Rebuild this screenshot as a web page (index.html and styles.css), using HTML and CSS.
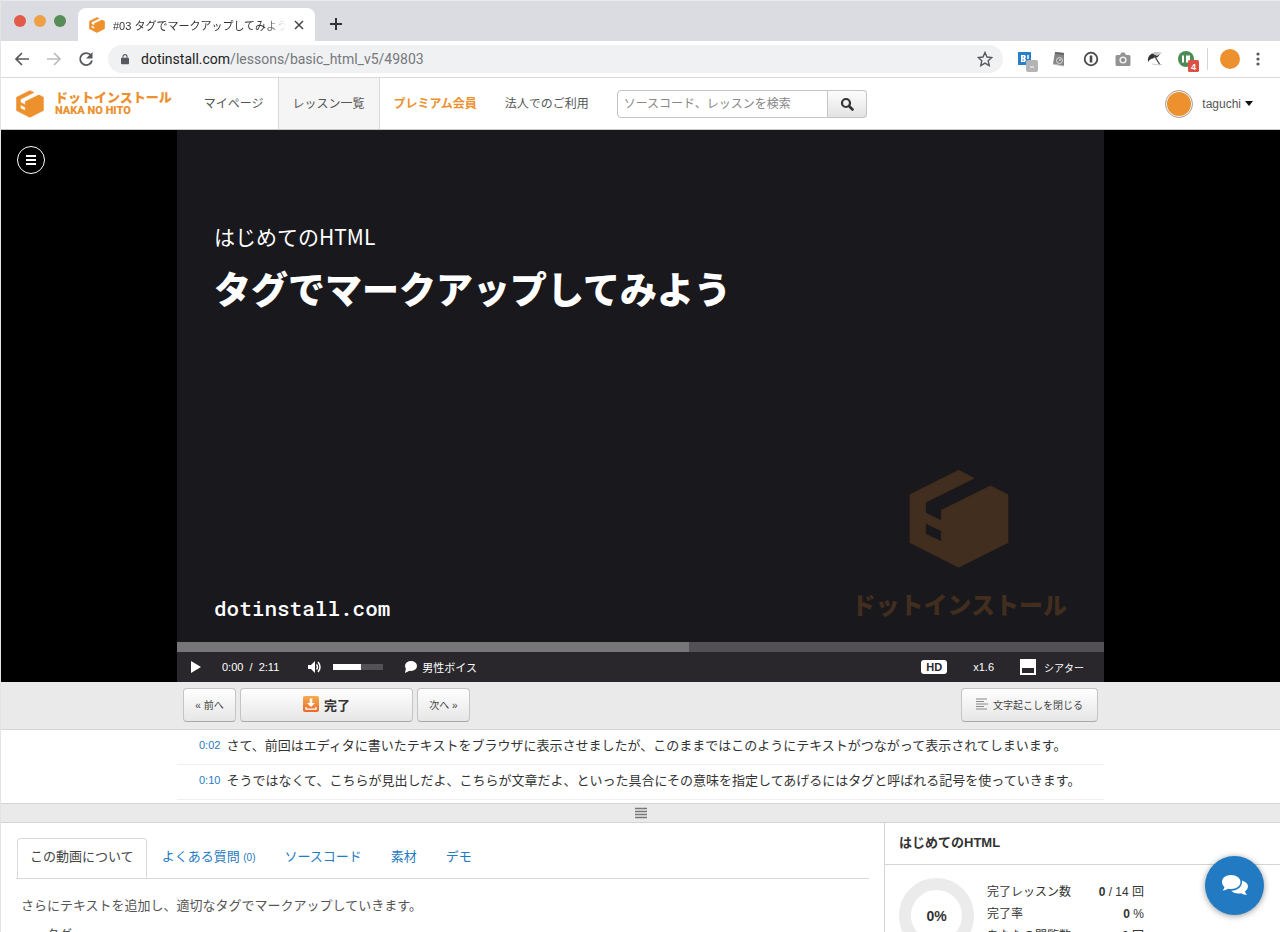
FILE: index.html
```html
<!DOCTYPE html>
<html lang="ja">
<head>
<meta charset="UTF-8">
<meta name="viewport" content="width=device-width, initial-scale=1.0">
<title>#03 タグでマークアップしてみよう</title>
<link rel="stylesheet" href="styles.css">
</head>
<body>
<svg class="defs" aria-hidden="true">
  <symbol id="box" viewBox="0 0 302 300">
    <path fill="currentColor" stroke="currentColor" stroke-width="4" stroke-linejoin="round" fill-rule="evenodd" d="M150 4 195 27 49 99V132L99 157V124L247 51 298 77V221L150 295 4 221V77ZM49 161 99 185V220L49 196Z"/>
  </symbol>
</svg>

<div class="tabstrip">
  <div class="lights">
    <span class="light red"></span>
    <span class="light yellow"></span>
    <span class="light green"></span>
  </div>
  <div class="browser-tab">
    <svg class="favicon"><use href="#box"/></svg>
    <span class="tab-title">#03 タグでマークアップしてみよう</span>
    <button class="icon-button" aria-label="閉じる">
      <svg width="10" height="10" viewBox="0 0 10 10"><path d="M1 1l8 8M9 1l-8 8" stroke="#444" stroke-width="1.5"/></svg>
    </button>
  </div>
  <button class="icon-button new-tab" aria-label="新しいタブ">
    <svg width="14" height="14" viewBox="0 0 14 14"><path d="M7 1v12M1 7h12" stroke="#333" stroke-width="2"/></svg>
  </button>
</div>

<div class="toolbar">
  <button class="icon-button" aria-label="戻る">
    <svg width="16" height="16" viewBox="0 0 16 16" fill="none" stroke="#55585c" stroke-width="1.7"><path d="M15 8H2.500M8 2 2 8l6 6"/></svg>
  </button>
  <button class="icon-button" aria-label="進む">
    <svg width="16" height="16" viewBox="0 0 16 16" fill="none" stroke="#babcbe" stroke-width="1.7"><path d="M1 8h12.500M8 2l6 6-6 6"/></svg>
  </button>
  <button class="icon-button" aria-label="再読み込み">
    <svg width="16" height="16" viewBox="0 0 16 16"><path d="M13 4.500A6 6 0 1 0 14 9.500" fill="none" stroke="#55585c" stroke-width="1.800"/><path d="M14.500 1v6.500H8z" fill="#55585c"/></svg>
  </button>
  <div class="address">
    <svg width="8" height="12" viewBox="0 0 10 13"><rect y="5" width="10" height="8" rx="1" fill="#55585c"/><path d="M2.500 5V3.500a2.500 2.500 0 0 1 5 0V5" fill="none" stroke="#55585c" stroke-width="1.400"/></svg>
    <span class="url"><b>dotinstall.com</b>/lessons/basic_html_v5/49803</span>
    <button class="icon-button" aria-label="ブックマーク">
      <svg width="16" height="16" viewBox="0 0 16 16"><path d="M8 1.500l2 4.500 4.800.5-3.600 3.300 1 4.800L8 12.100l-4.200 2.500 1-4.800L1.200 6.500 6 6z" fill="none" stroke="#55585c" stroke-width="1.400"/></svg>
    </button>
  </div>
  <div class="extensions">
    <svg width="22" height="22" viewBox="0 0 22 22"><rect x="2" y="4" width="13" height="13" fill="#2a7fc9"/><path d="M5 7h4l1 2-1 1.500 1 1.500-1 2H5z" fill="#fff"/><path d="M6.500 9h1.500M6.500 12h1.500" stroke="#2a7fc9"/><path d="M12 7v4M12 13v1.500" stroke="#fff" stroke-width="1.500"/><rect x="10" y="12" width="12" height="12" rx="2" fill="#b4b4b4"/><path d="M14 19h4" stroke="#fff"/></svg>
    <svg width="22" height="22" viewBox="0 0 22 22"><path d="M7 4l9 1v13l-11-2z" fill="#858585"/><path d="M7 4l9 1v2L7 6z" fill="#666"/><circle cx="11.500" cy="12.500" r="3" fill="none" stroke="#ddd"/><circle cx="12" cy="12" r="1" fill="#ddd"/><path d="M5 16l11 2" stroke="#bbb"/></svg>
    <svg width="22" height="22" viewBox="0 0 22 22"><circle cx="11" cy="11" r="6.300" fill="#fff" stroke="#4a4a4a" stroke-width="1.800"/><rect x="9.700" y="7.500" width="2.600" height="7" rx=".5" fill="#4a4a4a"/></svg>
    <svg width="22" height="22" viewBox="0 0 22 22"><path d="M5 7h3l1.500-2.500h3L14 7h3q1.500 0 1.500 1.500v8Q18.500 18 17 18H5q-1.500 0-1.500-1.500v-8Q3.500 7 5 7z" fill="#939393"/><circle cx="11" cy="12" r="3.600" fill="#eee"/><circle cx="11" cy="12" r="2" fill="#888"/></svg>
    <svg width="22" height="22" viewBox="0 0 22 22"><path d="M4 14Q3 8 8 5.500q4-2 8 0-1 3-3 4-2-1-4 1-3 0-5 3.500z" fill="#333"/><path d="M8 5.500q5-2.500 10-.5l-5 3z" fill="#c8c8c8"/><path d="M10 7l6 10" stroke="#444" stroke-width="1.300"/><path d="M8 16q6 1.500 10 .5" stroke="#ccc" fill="none"/></svg>
    <svg width="22" height="22" viewBox="0 0 22 22"><circle cx="10" cy="11" r="8" fill="#4d8b55"/><path d="M6 7.500h2v7H6zM10 7.500h4v7h-4z" fill="#fff"/><rect x="12" y="12" width="11" height="12" rx="1.500" fill="#dd5144"/><text x="17.500" y="21.500" text-anchor="middle" class="badge">4</text></svg>
  </div>
  <span class="profile"></span>
  <button class="icon-button" aria-label="メニュー">
    <svg width="4" height="16" viewBox="0 0 4 16" fill="#55585c"><circle cx="2" cy="3" r="1.600"/><circle cx="2" cy="8" r="1.600"/><circle cx="2" cy="13" r="1.600"/></svg>
  </button>
</div>

<header class="site-header">
  <a class="logo" href="#">
    <svg class="logo-mark"><use href="#box"/></svg>
    <span class="logo-text"><span class="logo-name">ドットインストール</span><span class="logo-sub">NAKA NO HITO</span></span>
  </a>
  <nav class="nav">
    <a href="#">マイページ</a>
    <a class="current" href="#">レッスン一覧</a>
    <a class="premium" href="#">プレミアム会員</a>
    <a href="#">法人でのご利用</a>
  </nav>
  <form class="search">
    <input type="text" aria-label="検索" placeholder="ソースコード、レッスンを検索">
    <button type="button" aria-label="検索する">
      <svg width="14" height="14" viewBox="0 0 14 14"><circle cx="6" cy="6" r="4" fill="none" stroke="#333" stroke-width="2.200"/><path d="M9 9l3.500 3.500" stroke="#333" stroke-width="2.600" stroke-linecap="round"/></svg>
    </button>
  </form>
  <a class="user" href="#">
    <span class="avatar"></span>
    taguchi
    <span class="caret"></span>
  </a>
</header>

<main>
  <section class="stage">
    <button class="menu" aria-label="レッスンメニュー">
      <svg width="10" height="10" viewBox="0 0 10 10"><path d="M0 1h10M0 5h10M0 9h10" stroke="#fff" stroke-width="2"/></svg>
    </button>
    <div class="player">
      <div class="slide">
        <div class="slide-text">
          <p class="course">はじめてのHTML</p>
          <h1>タグでマークアップしてみよう</h1>
          <p class="domain">dotinstall.com</p>
        </div>
        <div class="watermark">
          <svg class="watermark-mark"><use href="#box"/></svg>
          <span>ドットインストール</span>
        </div>
      </div>
      <progress class="buffer" value="512" max="927" aria-label="読み込み"></progress>
      <div class="controls">
        <button class="icon-button" aria-label="再生">
          <svg width="10" height="12" viewBox="0 0 10 12"><path d="M0 0l10 6-10 6z" fill="#fff"/></svg>
        </button>
        <span class="time">0:00 &nbsp;/ &nbsp;2:11</span>
        <button class="icon-button" aria-label="ミュート">
          <svg width="14" height="12" viewBox="0 0 14 12"><path d="M0 4h3l4-4v12L3 8H0z" fill="#fff"/><path d="M8.500 3.500q2 2.500 0 5M10 1q4 5 0 10" fill="none" stroke="#fff" stroke-width="1.500"/></svg>
        </button>
        <input class="volume" type="range" min="0" max="100" value="56" aria-label="音量">
        <button class="icon-button voice">
          <svg width="13" height="12" viewBox="0 0 13 12"><ellipse cx="7" cy="5" rx="6" ry="5" fill="#fff"/><path d="M2 7l-1 5 6-3z" fill="#fff"/></svg>
          男性ボイス
        </button>
        <button class="icon-button hd">HD</button>
        <button class="icon-button speed">x1.6</button>
        <button class="icon-button theater">
          <svg width="16" height="16" viewBox="0 0 16 16"><path fill="#fff" fill-rule="evenodd" d="M0 0h16v16H0zM2 9v5h12V9z"/></svg>
          シアター
        </button>
      </div>
    </div>
  </section>

  <div class="actions">
    <div class="actions-inner">
      <button class="btn">« 前へ</button>
      <button class="btn done">
        <svg width="16" height="16" viewBox="0 0 16 16"><defs><linearGradient id="og" x2="0" y2="1"><stop stop-color="#f6ab4e"/><stop offset="1" stop-color="#e96a2c"/></linearGradient></defs><rect width="16" height="16" rx="2" fill="url(#og)"/><path d="M6.700 2.500h2.600V7H12l-4 4-4-4h2.700z" fill="#fff"/><path d="M3 11v2.200h10V11" fill="none" stroke="#fff" stroke-width="1.300"/></svg>
        完了
      </button>
      <button class="btn">次へ »</button>
      <button class="btn transcript-toggle">
        <svg width="12" height="12" viewBox="0 0 12 12"><path d="M0 1h11M0 3.500h8M0 6h12M0 8.500h8M0 11h11" stroke="#888"/></svg>
        文字起こしを閉じる
      </button>
    </div>
  </div>

  <div class="transcript">
    <ul>
      <li><a href="#">0:02</a>さて、前回はエディタに書いたテキストをブラウザに表示させましたが、このままではこのようにテキストがつながって表示されてしまいます。</li>
      <li><a href="#">0:10</a>そうではなくて、こちらが見出しだよ、こちらが文章だよ、といった具合にその意味を指定してあげるにはタグと呼ばれる記号を使っていきます。</li>
    </ul>
  </div>
  <div class="resizer">
    <svg width="12" height="12" viewBox="0 0 12 12"><path d="M0 1.500h12M0 4.500h12M0 7.500h12M0 10.500h12" stroke="#777" stroke-width="1.500"/></svg>
  </div>

  <div class="columns">
    <section class="about">
      <nav class="tabs">
        <a class="active" href="#">この動画について</a>
        <a href="#">よくある質問 <small>(0)</small></a>
        <a href="#">ソースコード</a>
        <a href="#">素材</a>
        <a href="#">デモ</a>
      </nav>
      <div class="description">
        <p>さらにテキストを追加し、適切なタグでマークアップしていきます。</p>
        <ul>
          <li>タグ</li>
        </ul>
      </div>
    </section>
    <aside class="progress">
      <h2>はじめてのHTML</h2>
      <div class="stats">
        <div class="donut">0%</div>
        <table>
          <tr><th>完了レッスン数</th><td><b>0</b> / 14 回</td></tr>
          <tr><th>完了率</th><td><b>0</b> %</td></tr>
          <tr><th>あなたの閲覧数</th><td><b>0</b> 回</td></tr>
        </table>
      </div>
    </aside>
  </div>
</main>

<button class="chat" aria-label="チャット">
  <svg width="28" height="24" viewBox="0 0 28 24" fill="#fff"><path d="M10 1C4.500 1 1 4 1 8c0 2 1 3.800 2.500 5Q3 15 1.500 16.500q3.500 0 5.500-1.800 1.500.3 3 .3c5.500 0 9.500-3 9.500-7S15.500 1 10 1z"/><path d="M21 6.500q.5 5-3.500 8-3.500 2.500-7.500 2.200 3 3 8 2.800 1.200 0 2.200-.3 2.300 1.800 5.800 1.800-1.500-1.500-2-3.500Q27 15.500 27 12.500q0-4-6-6z"/></svg>
</button>
</body>
</html>
```
FILE: styles.css
```css
* {
  box-sizing: border-box;
}

body {
  display: flex;
  flex-direction: column;
  height: 100vh;
  margin: 0;
  overflow: hidden;
  border-left: 1px solid #e4e4e4;
  background: #fff;
  color: #333;
  font-family: "Liberation Sans", "Noto Sans CJK JP", sans-serif;
  font-size: 13px;
}

a {
  color: #1f7bc2;
  text-decoration: none;
}

p, h1, h2, ul {
  margin: 0;
  padding: 0;
}

svg {
  flex: none;
}

button, input {
  font-family: inherit;
}

.defs {
  position: absolute;
  width: 0;
  height: 0;
}

.icon-button {
  display: flex;
  align-items: center;
  padding: 0;
  border: 0;
  background: none;
  color: inherit;
}

/* browser window */
.tabstrip {
  display: flex;
  flex: none;
  align-items: center;
  height: 41px;
  padding-left: 13px;
  background: #dbdce1;
  border-top: 1px solid #e8e9ec;
}

.lights {
  display: flex;
  gap: 8px;
}

.light {
  width: 12px;
  height: 12px;
  border-radius: 50%;
}

.red { background: #e25b48; }
.yellow { background: #eda045; }
.green { background: #578c56; }

.browser-tab {
  display: flex;
  align-items: center;
  align-self: flex-end;
  gap: 8px;
  width: 237px;
  height: 33px;
  margin-left: 12px;
  padding: 0 11px;
  border-radius: 8px 8px 0 0;
  background: #fff;
}

.favicon {
  width: 16px;
  height: 16px;
  color: #ec912e;
}

.tab-title {
  flex: 1;
  overflow: hidden;
  white-space: nowrap;
  font-size: 11px;
  mask-image: linear-gradient(to right, #000 88%, transparent);
}

.new-tab {
  margin-left: 14px;
  padding-top: 6px;
}

.toolbar {
  display: flex;
  flex: none;
  align-items: center;
  gap: 16px;
  height: 37px;
  padding: 0 20px 0 13px;
  border-bottom: 1px solid #d9d9db;
}

.address {
  display: flex;
  flex: 1;
  align-items: center;
  gap: 12px;
  height: 28px;
  margin-left: -2px;
  padding: 0 10px 0 13px;
  border-radius: 14px;
  background: #f0f1f2;
}

.url {
  flex: 1;
  color: #75787c;
  font: 14px Roboto, sans-serif;
}

.url b {
  color: #222;
  font-weight: normal;
}

.extensions {
  display: flex;
  gap: 10px;
  margin-left: -3px;
  padding-right: 9px;
  border-right: 1px solid #d4d4d4;
}

.extensions svg {
  overflow: visible;
}

.badge {
  fill: #fff;
  font: bold 9px "Liberation Sans", sans-serif;
}

.profile {
  width: 20px;
  height: 20px;
  margin-left: -4px;
  border-radius: 50%;
  background: #ec912e;
}

/* site header */
.site-header {
  display: flex;
  flex: none;
  align-items: center;
  height: 52px;
  padding: 0 27px 0 15px;
  border-bottom: 1px solid #c8c8c8;
  font-size: 12px;
}

.logo {
  display: flex;
  align-items: center;
  gap: 11px;
  margin-right: 18px;
  color: #ec912e;
}

.logo-mark {
  width: 28px;
  height: 28px;
}

.logo-text {
  display: flex;
  flex-direction: column;
}

.logo-name {
  font: 900 13px/14px "Noto Sans CJK JP", sans-serif;
}

.logo-sub {
  font: 900 11px/13px Roboto, sans-serif;
}

.nav {
  display: flex;
  align-self: stretch;
}

.nav a {
  display: flex;
  align-items: center;
  padding: 0 14px 2px;
  color: #555;
}

.nav .current {
  border: 1px solid #d9d9d9;
  border-width: 0 1px;
  background: #f5f5f5;
}

.nav .premium {
  color: #ec912e;
  font-weight: bold;
}

.search {
  display: flex;
  width: 250px;
  height: 28px;
  margin-left: 14px;
}

.search input {
  flex: 1;
  min-width: 0;
  padding: 0 6px;
  border: 1px solid #c4c4c4;
  border-radius: 4px 0 0 4px;
  font-size: 12px;
}

.search input::placeholder {
  color: #888;
}

.search button {
  display: flex;
  align-items: center;
  justify-content: center;
  width: 39px;
  border: 1px solid #c4c4c4;
  border-left: 0;
  border-radius: 0 4px 4px 0;
  background: linear-gradient(#fdfdfd, #e3e3e3);
}

.user {
  display: flex;
  align-items: center;
  gap: 4px;
  margin-left: auto;
  color: #555;
}

.avatar {
  width: 28px;
  height: 28px;
  margin-right: 5px;
  border: 1px solid #aaa;
  border-radius: 50%;
  background: #ec912e;
  box-shadow: inset 0 0 0 1px #fff;
}

.caret {
  border: 4px solid transparent;
  border-top: 5px solid #111;
  border-bottom: 0;
}

/* video */
main {
  display: flex;
  flex: 1;
  flex-direction: column;
}

.stage {
  position: relative;
  background: #000;
}

.menu {
  position: absolute;
  top: 16px;
  left: 16px;
  display: flex;
  align-items: center;
  justify-content: center;
  width: 28px;
  height: 28px;
  padding: 0;
  border: 1px solid #fff;
  border-radius: 50%;
  background: none;
}

.player, .actions-inner, .transcript ul {
  width: 100%;
  max-width: 927px;
  margin: 0 auto;
}

.slide {
  display: flex;
  justify-content: space-between;
  aspect-ratio: 927 / 512;
  padding: 90px 37px 18px;
  background: #19181d;
  color: #fff;
}

.slide-text {
  display: flex;
  flex-direction: column;
}

.course {
  font: 21px/32px "Noto Sans CJK JP", sans-serif;
}

h1 {
  font: 900 37px/72px "Noto Sans CJK JP", sans-serif;
}

.domain {
  margin-top: auto;
  font: 500 21px/32px "Roboto Mono", "DejaVu Sans Mono", monospace;
}

.watermark {
  display: flex;
  flex-direction: column;
  align-items: center;
  justify-content: flex-end;
  gap: 15px;
  color: #412e1e;
  font: 900 24px/40px "Noto Sans CJK JP", sans-serif;
}

.watermark-mark {
  width: 100px;
  height: 100px;
}

.buffer {
  display: block;
  width: 100%;
  height: 10px;
  border: 0;
  appearance: none;
}

.buffer::-webkit-progress-bar {
  background: #535156;
}

.buffer::-webkit-progress-value {
  background: #767577;
}

.controls {
  display: flex;
  align-items: center;
  height: 30px;
  padding: 0 20px 0 14px;
  background: #29272c;
  color: #fff;
  font-size: 11px;
}

.controls button {
  gap: 5px;
  font-size: 11px;
}

.time {
  margin: 0 29px 0 21px;
}

.controls .volume {
  width: 50px;
  height: 6px;
  margin: 0 21px 0 11px;
  appearance: none;
  background: linear-gradient(to right, #fff 56%, #535156 56%);
}

.volume::-webkit-slider-thumb {
  width: 0;
  appearance: none;
}

.controls .hd {
  margin-left: auto;
  padding: 1px 5px;
  border-radius: 3px;
  background: #fff;
  color: #29272c;
  font-weight: bold;
}

.controls .speed {
  margin: 0 26px;
}

.controls .theater {
  gap: 8px;
  font-size: 10px;
}

/* prev / done / next */
.actions {
  padding: 6px 0 7px;
  border-bottom: 1px solid #d4d4d4;
  background: #eaeaea;
}

.actions-inner {
  display: flex;
  gap: 4px;
  padding: 0 6px;
}

.btn {
  display: flex;
  align-items: center;
  justify-content: center;
  gap: 5px;
  width: 53px;
  height: 34px;
  padding: 0 0 2px;
  border: 1px solid #c4c4c4;
  border-bottom-color: #aaa;
  border-radius: 4px;
  background: linear-gradient(#fff, #e6e6e6);
  color: #444;
  font-size: 10px;
}

.done {
  width: 173px;
  color: #333;
  font-size: 13px;
  font-weight: bold;
}

.transcript-toggle {
  width: 137px;
  margin-left: auto;
}

/* transcript */
.transcript {
  height: 73px;
  overflow: hidden;
}

.transcript li {
  display: flex;
  align-items: center;
  gap: 6px;
  height: 35px;
  padding: 0 0 5px 22px;
  border-bottom: 1px solid #f0f0f0;
  list-style: none;
  white-space: nowrap;
}

.transcript a {
  font-size: 11px;
}

.resizer {
  display: flex;
  align-items: center;
  justify-content: center;
  height: 20px;
  border: 1px solid #d4d4d4;
  border-width: 1px 0;
  background: #eaeaea;
}

/* lower part */
.columns {
  display: flex;
  flex: 1;
}

.about {
  flex: 1;
  padding: 15px 15px 0;
}

.tabs {
  display: flex;
  padding-left: 1px;
  border-bottom: 1px solid #d9d9d9;
}

.tabs a {
  height: 40px;
  padding: 0 14px 0 15px;
  line-height: 38px;
}

.tabs .active {
  margin-bottom: -1px;
  padding: 0 12px;
  border: 1px solid #d9d9d9;
  border-bottom: 0;
  border-radius: 4px 4px 0 0;
  background: #fff;
  color: #444;
  line-height: 36px;
}

.tabs small {
  font-size: 10px;
}

.description {
  padding: 14px 5px;
  color: #555;
  line-height: 26px;
}

.description ul {
  padding: 3px 0 0 25px;
}

.progress {
  width: 396px;
  border-left: 1px solid #d4d4d4;
}

.progress h2 {
  padding: 0 0 2px 14px;
  border-bottom: 1px solid #d4d4d4;
  font-size: 13px;
  line-height: 39px;
}

.stats {
  display: flex;
  gap: 13px;
  padding: 13px 14px;
  font-size: 12px;
}

.donut {
  display: flex;
  align-items: center;
  justify-content: center;
  width: 75px;
  height: 75px;
  border: 12px solid #ebebeb;
  border-radius: 50%;
  font-size: 14px;
  font-weight: bold;
}

.stats table {
  width: 157px;
  margin-top: 3px;
  border-spacing: 0;
  align-self: flex-start;
}

.stats th, .stats td {
  height: 22px;
  padding: 0;
  line-height: 20px;
  text-align: left;
  font-weight: normal;
}

.stats td {
  text-align: right;
}

.chat {
  position: fixed;
  right: 16px;
  bottom: 17px;
  display: flex;
  align-items: center;
  justify-content: center;
  width: 59px;
  height: 59px;
  padding: 0;
  border: 0;
  border-radius: 50%;
  background: #227bc2;
  box-shadow: 0 1px 6px rgba(0, 0, 0, 0.4);
}
```
